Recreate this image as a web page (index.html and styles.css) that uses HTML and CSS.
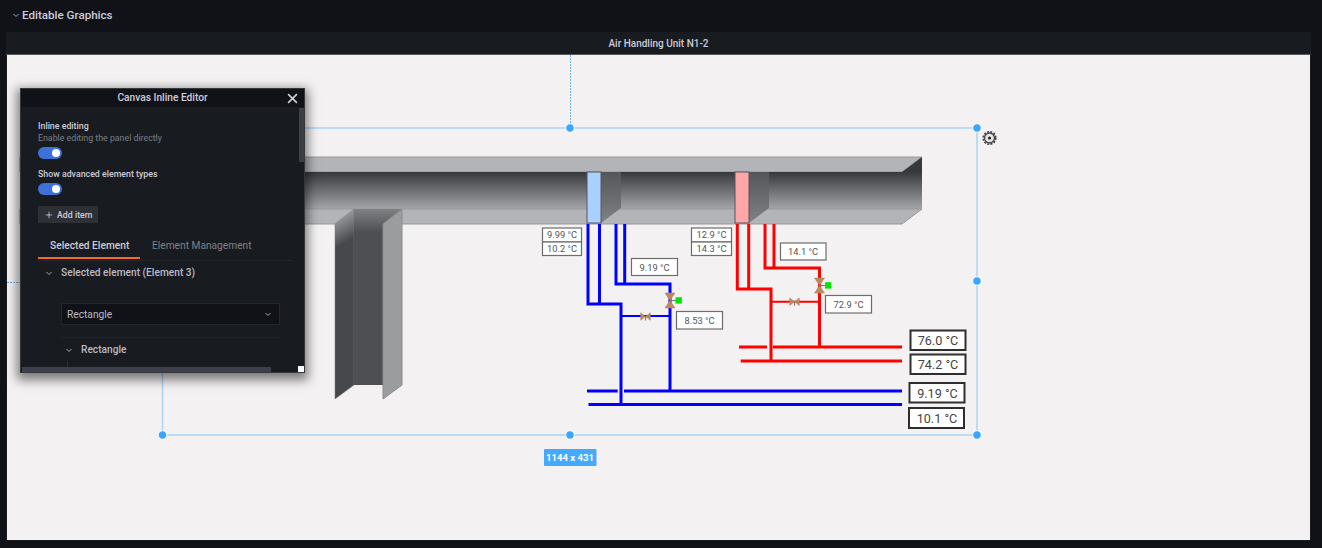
FILE: index.html
```html
<!DOCTYPE html>
<html lang="en">
<head>
    <meta charset="UTF-8">
    <title>Editable Graphics</title>
    <link rel="stylesheet" href="styles.css">
</head>
<body>
    <div class="row-title">
        <svg class="chev" viewBox="0 0 8 8"><polyline points="1.5,3 4,5.5 6.5,3"/></svg>
        <span>Editable Graphics</span>
    </div>

    <div class="panel">
        <div class="panel-header">Air Handling Unit N1-2</div>
        <div class="canvas">
            <!-- viewBox starts at the canvas offset so the numbers are page pixels -->
            <svg class="diagram" viewBox="7 55 1303 484">
                <defs>
                    <linearGradient id="ductFront" gradientUnits="userSpaceOnUse" x1="0" y1="172" x2="0" y2="209">
                        <stop offset="0" stop-color="#37383c"/>
                        <stop offset="1" stop-color="#a5a6a9"/>
                    </linearGradient>
                    <linearGradient id="damperSide" x1="0" y1="0" x2="0" y2="1">
                        <stop offset="0" stop-color="#55565a"/>
                        <stop offset="1" stop-color="#808184"/>
                    </linearGradient>
                    <linearGradient id="leftFace" gradientUnits="userSpaceOnUse" x1="335" y1="214" x2="350" y2="240">
                        <stop offset="0" stop-color="#a8a9ac"/>
                        <stop offset="1" stop-color="#47484c"/>
                    </linearGradient>
                    <linearGradient id="midFace" gradientUnits="userSpaceOnUse" x1="0" y1="209" x2="0" y2="232">
                        <stop offset="0" stop-color="#808184"/>
                        <stop offset="1" stop-color="#4e4f53"/>
                    </linearGradient>
                    <g id="valve">
                        <path class="valve" d="M-5 -7.5H5L0 0Z"/>
                        <path class="valve" d="M-5 7.5H5L0 0Z"/>
                        <path class="valve-stem" d="M0 0H6"/>
                        <rect class="valve-head" x="5.5" y="-3.3" width="6.4" height="6.4"/>
                    </g>
                    <g id="bypass">
                        <path class="valve" d="M-4.8 -3.8V3.8L0 0Z"/>
                        <path class="valve" d="M4.8 -3.8V3.8L0 0Z"/>
                        <path class="valve-stem" d="M0 0V4"/>
                    </g>
                </defs>

                <!-- main duct -->
                <polygon class="duct-face" points="20,157 922,157 902,172 20,172"/>
                <rect x="20" y="172" width="882" height="37" fill="url(#ductFront)"/>
                <polygon points="902,172 922,157 922,209 902,209" fill="url(#ductFront)"/>
                <polygon class="duct-face" points="20,209 922,209 902,224 20,224"/>

                <!-- branch going down -->
                <polygon class="edge" points="335,224 354,209 354,385 335,399" fill="url(#leftFace)"/>
                <polygon points="354,209 402,209 383,224 383,385 354,385" fill="url(#midFace)"/>
                <polygon class="branch-right" points="383,224 402,209 402,385 383,399"/>

                <!-- dampers -->
                <polygon points="601,172 621,172 621,208 601,223" fill="url(#damperSide)"/>
                <rect class="damper-cold" x="587" y="172" width="14" height="51"/>
                <polygon points="749,172 769,172 769,208 749,223" fill="url(#damperSide)"/>
                <rect class="damper-hot" x="735" y="172" width="14" height="51"/>

                <!-- selection box -->
                <path class="guide" d="M570.5 55V128M7 282.5H162"/>
                <rect class="select-box" x="162.5" y="128" width="814.5" height="307"/>

                <!-- cold water -->
                <path class="pipe cold" d="M588 224V304H621V404M599.5 224V304"/>
                <path class="pipe cold" d="M616 224V284H670V391M624.7 224V284"/>
                <path class="pipe cold thin" d="M621 316H670"/>
                <path class="pipe cold" d="M587 391H617.7M624 391H902M588.5 404.5H902"/>
                <use href="#bypass" x="645.5" y="316.5"/>
                <use href="#valve" x="670" y="300.5"/>

                <!-- hot water -->
                <path class="pipe hot" d="M737.3 224V289H771V361M748.7 224V289"/>
                <path class="pipe hot" d="M765 224V268H819.5V347M774 224V268"/>
                <path class="pipe hot thin" d="M771 301.7H819.5"/>
                <path class="pipe hot" d="M739 347H767M773 347H902M740.7 361H902"/>
                <use href="#bypass" x="794.5" y="301.7"/>
                <use href="#valve" x="819.5" y="285.5"/>

                <!-- readings -->
                <rect class="tag" x="542.5" y="228" width="39" height="14"/>
                <text class="tag-text" x="562" y="238">9.99 °C</text>
                <rect class="tag" x="542.5" y="242" width="39" height="13.5"/>
                <text class="tag-text" x="562" y="252">10.2 °C</text>
                <rect class="tag" x="691.5" y="228" width="40" height="14"/>
                <text class="tag-text" x="711.5" y="238">12.9 °C</text>
                <rect class="tag" x="691.5" y="242" width="40" height="13.5"/>
                <text class="tag-text" x="711.5" y="252">14.3 °C</text>
                <rect class="tag" x="631.5" y="258.5" width="46" height="17"/>
                <text class="tag-text" x="654.5" y="270.5">9.19 °C</text>
                <rect class="tag" x="676.5" y="311.5" width="46" height="17.5"/>
                <text class="tag-text" x="699.5" y="323.5">8.53 °C</text>
                <rect class="tag" x="780.5" y="243" width="45.5" height="17"/>
                <text class="tag-text" x="803" y="255">14.1 °C</text>
                <rect class="tag" x="825.5" y="295.5" width="46" height="17.5"/>
                <text class="tag-text" x="848.5" y="307.5">72.9 °C</text>

                <rect class="tag big" x="910.5" y="330.5" width="55" height="19.5"/>
                <text class="big-text" x="938" y="345">76.0 °C</text>
                <rect class="tag big" x="910.5" y="354.5" width="55" height="19.5"/>
                <text class="big-text" x="938" y="369">74.2 °C</text>
                <rect class="tag big" x="909.5" y="383" width="55" height="19.5"/>
                <text class="big-text" x="937.5" y="397.5">9.19 °C</text>
                <rect class="tag big" x="909" y="408" width="55" height="20"/>
                <text class="big-text" x="937" y="423">10.1 °C</text>

                <!-- handles -->
                <circle class="handle" cx="570" cy="128" r="4.3"/>
                <circle class="handle" cx="977" cy="128" r="4.3"/>
                <circle class="handle" cx="977" cy="281" r="4.3"/>
                <circle class="handle" cx="977" cy="435" r="4.3"/>
                <circle class="handle" cx="570" cy="435" r="4.3"/>
                <circle class="handle" cx="162.5" cy="435" r="4.3"/>

                <rect class="size-box" x="544" y="449" width="52.5" height="17" rx="1"/>
                <text class="size-text" x="570" y="461">1144 x 431</text>

                <!-- settings gear -->
                <circle class="gear-teeth" cx="989.5" cy="138" r="6.3"/>
                <circle class="gear-ring" cx="989.5" cy="138" r="5"/>
                <circle class="gear-dot" cx="989.5" cy="138" r="1.6"/>
            </svg>

            <div class="editor">
                <div class="editor-head">
                    <span>Canvas Inline Editor</span>
                    <svg class="close" viewBox="0 0 10 10"><path d="M1 1L9 9M9 1L1 9"/></svg>
                </div>
                <div class="editor-body">
                    <div class="field-label">Inline editing</div>
                    <div class="field-desc">Enable editing the panel directly</div>
                    <div class="switch"></div>
                    <div class="field-label second">Show advanced element types</div>
                    <div class="switch"></div>
                    <button class="add-btn">
                        <svg viewBox="0 0 10 10"><path d="M5 1V9M1 5H9"/></svg>
                        Add item
                    </button>
                    <div class="tabs">
                        <div class="tab active">Selected Element</div>
                        <div class="tab">Element Management</div>
                    </div>
                    <div class="section-head">
                        <svg class="chev" viewBox="0 0 8 8"><polyline points="1.5,3 4,5.5 6.5,3"/></svg>
                        <span>Selected element (Element 3)</span>
                    </div>
                    <div class="section-body">
                        <div class="select">
                            <span>Rectangle</span>
                            <svg class="chev" viewBox="0 0 8 8"><polyline points="1.5,3 4,5.5 6.5,3"/></svg>
                        </div>
                        <div class="sub-head">
                            <svg class="chev" viewBox="0 0 8 8"><polyline points="1.5,3 4,5.5 6.5,3"/></svg>
                            <span>Rectangle</span>
                        </div>
                        <div class="sub-line"></div>
                    </div>
                </div>
                <div class="scroll-y"></div>
                <div class="scroll-x"></div>
                <div class="resize"></div>
            </div>
        </div>
    </div>
</body>
</html>
```

FILE: styles.css
```css
html, body { margin: 0; height: 548px; overflow: hidden; }
body { background: #111217; font-family: Roboto, "Liberation Sans", sans-serif; color: #ccccdc; }

.chev { width: 8px; height: 8px; flex: none; }
.chev polyline { fill: none; stroke: #a5a7ad; stroke-width: 1; }

.row-title { height: 32px; display: flex; align-items: center; gap: 2px; padding: 0 0 2px 12px; box-sizing: border-box; font-size: 11.6px; font-weight: 500; }

.panel { margin: 0 11px 0 6px; height: 509px; display: flex; flex-direction: column; background: #181b1f; border-radius: 2px; }
.panel-header { height: 23px; line-height: 23px; text-align: center; font-size: 10px; font-weight: 500; flex: none; border-bottom: 1px solid #55585c; box-sizing: border-box; }
.canvas { flex: 1; position: relative; margin: 0 1px 1px; background: #f4f1f2; overflow: hidden; }
.diagram { display: block; width: 1303px; height: 484px; }

.duct-face { fill: #b3b4b8; stroke: #96979b; stroke-width: 1; }
.edge { stroke: #77787b; stroke-width: 0.5; }
.branch-right { fill: #9a9c9e; stroke: #8a8b8e; stroke-width: 1; }
.damper-cold { fill: #a9d0ff; stroke: #55565a; stroke-width: 1; }
.damper-hot { fill: #ffa6a8; stroke: #55565a; stroke-width: 1; }

.pipe { fill: none; stroke-width: 3; }
.pipe.thin { stroke-width: 2; }
.cold { stroke: #0000ff; }
.hot { stroke: #ff0000; }
.valve { fill: #c4875a; stroke: #a08468; stroke-width: 0.5; }
.valve-stem { stroke: #777; stroke-width: 1; fill: none; }
.valve-head { fill: #00e600; }

.tag { fill: #fff; stroke: #6c6c6c; stroke-width: 1.2; }
.tag.big { stroke: #2e2e2e; stroke-width: 2; }
.tag-text { font-size: 9.3px; fill: #555; text-anchor: middle; }
.big-text { font-size: 12.6px; fill: #444; text-anchor: middle; }

.guide { stroke: #6cb6f0; stroke-width: 1; stroke-dasharray: 2 1; fill: none; }
.select-box { fill: none; stroke: #a8d4fa; stroke-width: 1.5; }
.handle { fill: #3ba6ff; stroke: #fff; stroke-width: 1; }
.size-box { fill: #45aaff; }
.size-text { font-size: 9.6px; font-weight: 700; fill: #fff; text-anchor: middle; }
.gear-teeth { fill: none; stroke: #444; stroke-width: 1.6; stroke-dasharray: 2 1.3; }
.gear-ring { fill: #e6e4e5; stroke: #444; stroke-width: 1.3; }
.gear-dot { fill: #222; }

.editor { position: absolute; left: 13px; top: 33px; width: 285px; height: 285px; box-sizing: border-box; background: #181b1f; border: 1px solid #34373c; box-shadow: 0 4px 10px 3px rgba(0,0,0,0.5); overflow: hidden; }
.editor-head { height: 18px; background: #111217; position: relative; text-align: center; font-size: 10.2px; font-weight: 500; line-height: 18px; }
.close { position: absolute; right: 6px; top: 4px; width: 11px; height: 11px; }
.close path { stroke: #ccccdc; stroke-width: 1.5; fill: none; }
.editor-body { padding: 14px 12px 0 17px; }
.field-label { font-size: 8.8px; font-weight: 500; line-height: 11px; }
.field-label.second { margin-top: 10px; }
.field-desc { font-size: 8.8px; color: #7b7f87; line-height: 13px; }
.switch { width: 24px; height: 12px; border-radius: 6px; background: #3d71d9; position: relative; margin-top: 3px; }
.field-desc + .switch { margin-top: 2px; }
.switch::after { content: ""; position: absolute; right: 2px; top: 2px; width: 8px; height: 8px; border-radius: 50%; background: #fff; }
.add-btn { display: flex; align-items: center; gap: 4px; height: 17px; width: 60px; margin-top: 11px; padding: 0 0 0 7px; border: 0; border-radius: 1px; background: #2d3036; color: #ccccdc; font: 500 8.8px Roboto, "Liberation Sans", sans-serif; }
.add-btn svg { width: 8px; height: 8px; }
.add-btn svg path { stroke: #ccccdc; stroke-width: 1; }

.tabs { display: flex; margin-top: 11px; height: 27px; width: 254px; box-sizing: border-box; border-bottom: 1px solid #24272c; }
.tab { font-size: 10.2px; font-weight: 500; color: #7f8289; padding: 5px 12px 0; line-height: 14px; white-space: nowrap; }
.tab + .tab { font-weight: 400; }
.tab.active { color: #ccccdc; box-sizing: border-box; width: 102px; flex: none; border-bottom: 2px solid #f5682f; height: 25px; }

.section-head { display: flex; align-items: center; gap: 8px; padding: 0 0 0 7px; height: 23px; font-size: 10.2px; font-weight: 500; color: #b9bac6; }
.section-body { margin: 19px 0 0 23px; width: 219px; }
.select { height: 22px; box-sizing: border-box; display: flex; align-items: center; justify-content: space-between; padding: 0 7px 0 5px; background: #111217; border: 1px solid #24272c; font-size: 10.2px; color: #b9bac6; }
.sub-head { display: flex; align-items: center; gap: 8px; margin-top: 12px; padding-left: 4px; height: 24px; box-sizing: border-box; border-top: 1px solid #202328; font-size: 10.2px; font-weight: 500; color: #b9bac6; }
.sub-line { width: 1px; height: 8px; margin-left: 6px; background: #2a2d33; }

.scroll-y { position: absolute; right: 0; top: 19px; width: 5px; height: 54px; background: #3c3f46; }
.scroll-x { position: absolute; left: 1px; bottom: 0; width: 249px; height: 5px; background: #3d3f4b; }
.resize { position: absolute; right: 0; bottom: 0; width: 6px; height: 6px; background: #fff; }
```
